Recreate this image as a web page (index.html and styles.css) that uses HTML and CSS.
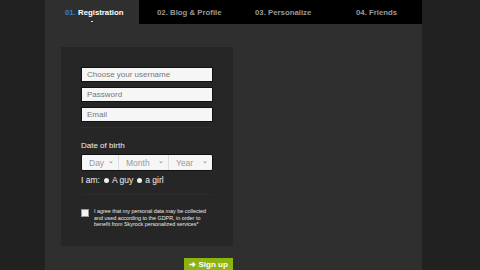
FILE: index.html
```html
<!DOCTYPE html>
<html>
<head>
<meta charset="utf-8">
<link rel="stylesheet" href="styles.css">
</head>
<body>
<div class="column">
  <div class="tabs">
    <div class="tab active t1"><span class="num">01.</span> Registration<span class="dot"></span></div>
    <div class="tab t2">02. Blog &amp; Profile</div>
    <div class="tab t3">03. Personalize</div>
    <div class="tab t4">04. Friends</div>
  </div>
  <div class="content">
    <div class="panel">
      <div class="field">Choose your username</div>
      <div class="field">Password</div>
      <div class="field">Email</div>
      <div class="sep"></div>
      <div class="label">Date of birth</div>
      <div class="selects">
        <div class="sel s1"><span>Day</span><span class="chev">&#8964;</span></div>
        <div class="sel s2"><span>Month</span><span class="chev">&#8964;</span></div>
        <div class="sel s3"><span>Year</span><span class="chev">&#8964;</span></div>
      </div>
      <div class="gender">I am: <span class="radio"></span> A guy <span class="radio"></span> a girl</div>
      <div class="sep2"></div>
      <div class="agree">
        <span class="box"></span>
        <p>I agree that my personal data may be collected and used according to the GDPR, in order to benefit from Skyrock personalized services*</p>
      </div>
    </div>
    <div class="actions"><div class="btn">&#10140; Sign up</div></div>
  </div>
</div>
</body>
</html>
```
FILE: styles.css
```css
html, body { margin: 0; padding: 0; }
body {
  background: #212121;
  width: 480px;
  height: 270px;
  overflow: hidden;
  font-family: "Liberation Sans", Arial, sans-serif;
}
.column {
  margin-left: 45px;
  width: 377px;
  height: 270px;
  background: #2f2f2f;
}
.tabs {
  display: flex;
  height: 24px;
  background: #000;
}
.tab {
  position: relative;
  box-sizing: border-box;
  height: 24px;
  padding-top: 8px;
  font-size: 7.8px;
  font-weight: bold;
  color: #9a9a9a;
  white-space: nowrap;
}
.t1 { width: 94px; padding-left: 20px; }
.t2 { width: 98px; padding-left: 18px; }
.t3 { width: 101px; padding-left: 18px; }
.t4 { flex: 1; padding-left: 18px; }
.tab.active { background: #2f2f2f; color: #fff; }
.num { color: #3b7fc4; }
.dot {
  position: absolute;
  left: 46px;
  top: 21px;
  width: 2px;
  height: 1px;
  background: #ddd;
}
.content {
  padding: 23px 0 0 16px;
}
.panel {
  box-sizing: border-box;
  width: 172px;
  height: 199px;
  background: #262626;
  padding: 20px 20px 0 20px;
}
.field {
  box-sizing: border-box;
  height: 15px;
  margin-bottom: 5px;
  background: #f6f6f6;
  border: 1px solid #111;
  font-size: 8px;
  line-height: 13px;
  padding-left: 5px;
  color: #777;
}
.sep {
  height: 1px;
  background: #2c2c2c;
  margin: 4px 0 13px 0;
}
.label {
  font-size: 8px;
  color: #f0f0f0;
  height: 10px;
  margin-bottom: 3px;
}
.selects {
  display: flex;
  box-sizing: border-box;
  height: 17px;
  background: #f6f6f6;
  border: 1px solid #111;
  border-radius: 2px;
}
.sel {
  display: flex;
  justify-content: space-between;
  align-items: center;
  box-sizing: border-box;
  padding: 0 4px 0 7px;
  font-size: 8.5px;
  color: #999;
  border-right: 1px solid #ddd;
}
.s1 { width: 37px; }
.s2 { width: 50px; }
.s3 { flex: 1; border-right: none; }
.chev { font-size: 7px; color: #777; margin-top: -4px; }
.gender {
  margin-top: 4px;
  font-size: 8.5px;
  color: #f0f0f0;
  height: 10px;
  display: flex;
  align-items: center;
  gap: 3px;
}
.radio {
  display: inline-block;
  width: 5px;
  height: 5px;
  border-radius: 50%;
  background: #eee;
  margin-left: 1px;
}
.sep2 {
  height: 1px;
  background: #2c2c2c;
  margin: 9px 0 13px 0;
}
.agree {
  display: flex;
  gap: 5px;
}
.box {
  flex: none;
  width: 6px;
  height: 6px;
  background: #f4f4f4;
  border: 1px solid #999;
  margin-top: 1px;
}
.agree p {
  margin: 0;
  font-size: 5.4px;
  line-height: 6.5px;
  color: #e8e8e8;
  width: 119px;
}
.actions {
  display: flex;
  justify-content: flex-end;
  width: 172px;
  margin-top: 12px;
}
.btn {
  width: 49px;
  height: 16px;
  background: #8db40e;
  color: #fff;
  font-size: 8px;
  font-weight: bold;
  text-align: center;
  line-height: 14px;
}
```
